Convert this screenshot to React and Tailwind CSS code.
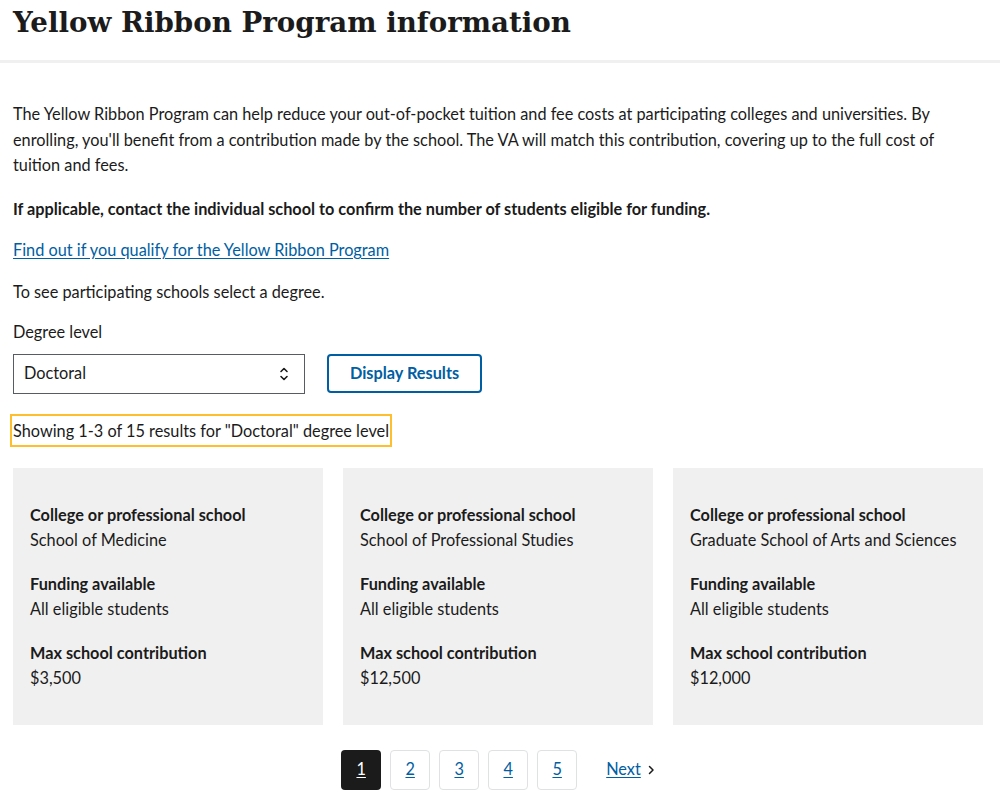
import React from "react";

const body = { fontFamily: "Lato, 'Noto Sans', sans-serif" };

function Chevrons() {
  return (
    <svg width="10" height="18" viewBox="0 0 10 18" fill="none" stroke="#1b1b1b" strokeWidth="1.6" strokeLinecap="round" strokeLinejoin="round">
      <path d="M2 6.5 L5 3.5 L8 6.5" />
      <path d="M2 11.5 L5 14.5 L8 11.5" />
    </svg>
  );
}

function Card({ school, funding, max }) {
  return (
    <div className="bg-[#f0f0f0] px-[17px] pt-[34px] pb-[34px] text-[16.3px] leading-[25.5px] text-[#1b1b1b]">
      <div className="font-bold">College or professional school</div>
      <div>{school}</div>
      <div className="font-bold mt-[18px]">Funding available</div>
      <div>{funding}</div>
      <div className="font-bold mt-[18px]">Max school contribution</div>
      <div>{max}</div>
    </div>
  );
}

export default function App() {
  return (
    <div className="w-[1000px] min-h-[804px] bg-white text-[#1b1b1b]" style={body}>
      <div className="border-b-[3px] border-[#f0f0f0] px-[13px] pt-[3px] pb-[17px]">
        <h1 className="text-[27.7px] leading-[40px] font-bold" style={{ fontFamily: "'DejaVu Serif', serif" }}>
          Yellow Ribbon Program information
        </h1>
      </div>
      <div className="px-[13px] w-[996px]">
        <p className="mt-[38px] text-[16.3px] leading-[25.5px]">
          The Yellow Ribbon Program can help reduce your out-of-pocket tuition and fee costs at participating colleges and universities. By enrolling, you'll benefit from a contribution made by the school. The VA will match this contribution, covering up to the full cost of tuition and fees.
        </p>
        <p className="mt-[18px] text-[16.3px] leading-[25.5px] font-bold">
          If applicable, contact the individual school to confirm the number of students eligible for funding.
        </p>
        <p className="mt-[16px] text-[16.3px] leading-[25.5px]">
          <a href="#" className="text-[#005ea2] underline underline-offset-2">Find out if you qualify for the Yellow Ribbon Program</a>
        </p>
        <p className="mt-[16px] text-[16.3px] leading-[25.5px]">To see participating schools select a degree.</p>
        <div className="mt-[15px] text-[16.3px] leading-[25.5px]">Degree level</div>
        <div className="mt-[9px] flex items-center gap-[22px]">
          <div className="w-[292px] h-[40px] border border-[#565c65] flex items-center justify-between pl-[10px] pr-[15px] text-[16.3px]">
            <span>Doctoral</span>
            <Chevrons />
          </div>
          <button className="w-[155px] h-[39px] border-2 border-[#005ea2] rounded-[4px] text-[#005ea2] font-bold text-[16.3px]">
            Display Results
          </button>
        </div>
        <div className="mt-[20px] h-[33px]">
          <span className="inline-block -ml-[3px] border-2 border-[#ffbe2e] px-[1px] py-[2px] text-[16.3px] leading-[25px]">
            Showing 1-3 of 15 results for "Doctoral" degree level
          </span>
        </div>
        <div className="mt-[21px] grid grid-cols-3 gap-[20px] w-[970px]">
          <Card school="School of Medicine" funding="All eligible students" max="$3,500" />
          <Card school="School of Professional Studies" funding="All eligible students" max="$12,500" />
          <Card school="Graduate School of Arts and Sciences" funding="All eligible students" max="$12,000" />
        </div>
        <div className="mt-[25px] flex justify-center items-center w-[970px]">
          <div className="flex gap-[9px]">
            <div className="w-[40px] h-[40px] rounded-[4px] bg-[#1b1b1b] text-white flex items-center justify-center text-[16.3px] underline underline-offset-2">1</div>
            {["2", "3", "4", "5"].map((n) => (
              <div key={n} className="w-[40px] h-[40px] rounded-[4px] border border-[#dfe1e2] text-[#005ea2] flex items-center justify-center text-[16.3px] underline underline-offset-2">{n}</div>
            ))}
          </div>
          <div className="ml-[29px] flex items-center gap-[6px] text-[16.3px] text-[#005ea2]">
            <span className="underline underline-offset-2">Next</span>
            <svg width="8" height="12" viewBox="0 0 8 12" fill="none" stroke="#1b1b1b" strokeWidth="1.5" strokeLinecap="round" strokeLinejoin="round">
              <path d="M2.5 2.5 L6 6 L2.5 9.5" />
            </svg>
          </div>
        </div>
      </div>
    </div>
  );
}
